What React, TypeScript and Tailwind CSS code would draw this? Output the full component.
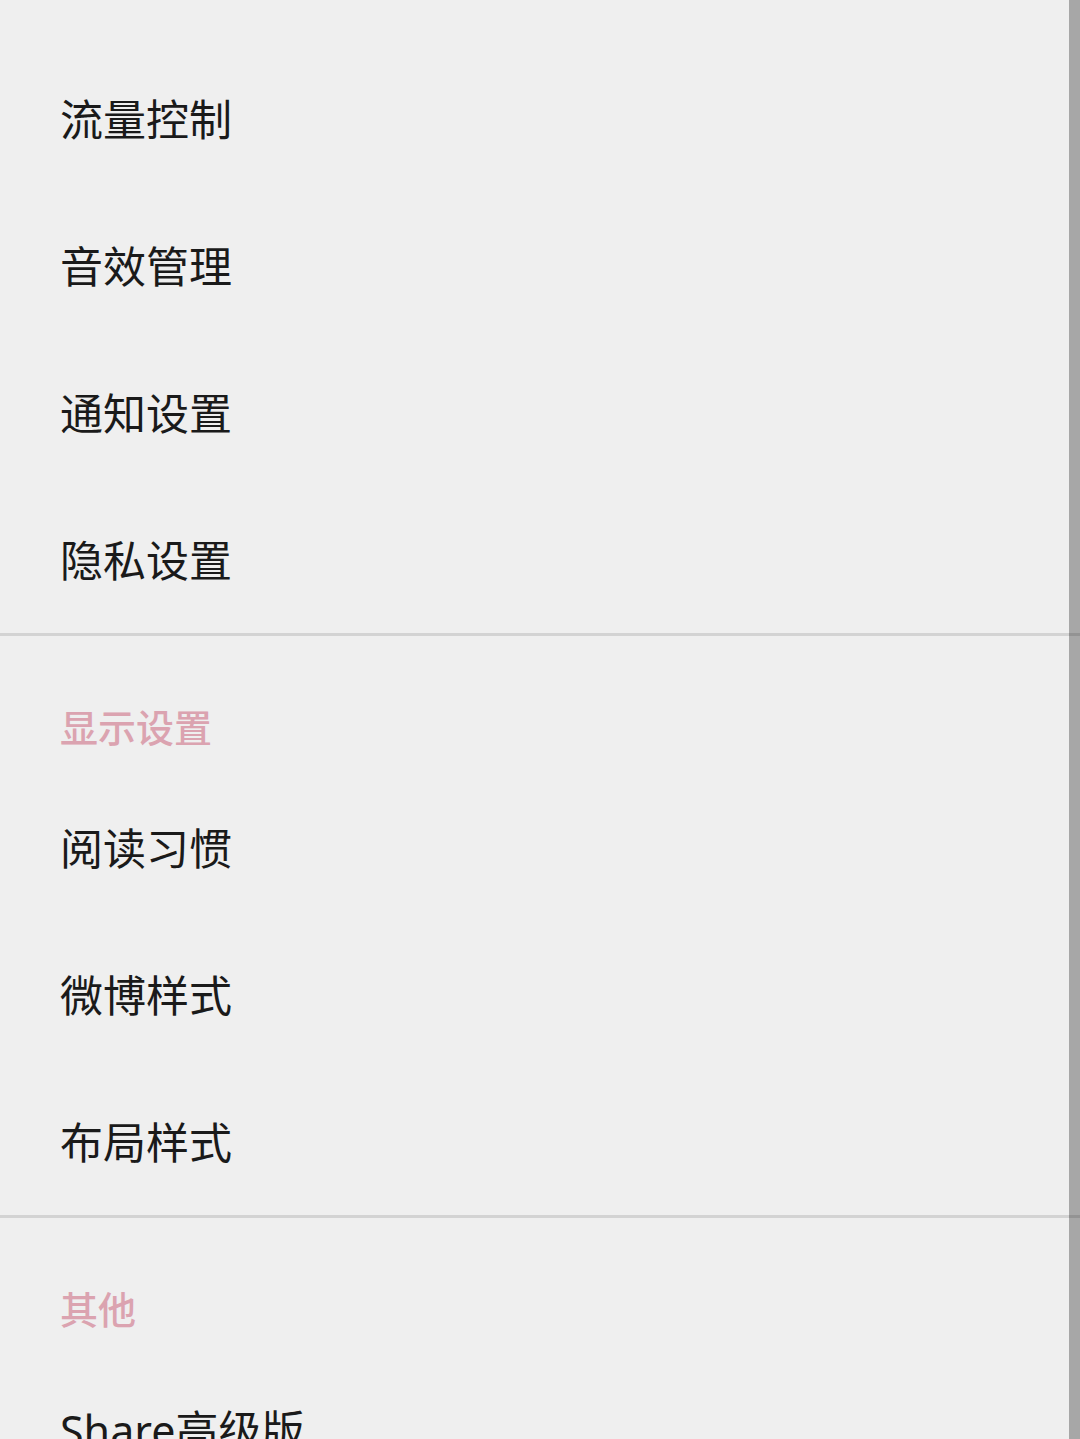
import React from "react";

interface Section {
  title?: string;
  items: string[];
}

const sections: Section[] = [
  { items: ["流量控制", "音效管理", "通知设置", "隐私设置"] },
  { title: "显示设置", items: ["阅读习惯", "微博样式", "布局样式"] },
  { title: "其他", items: ["Share高级版"] },
];

const font = { fontFamily: '"Noto Sans", "Noto Sans CJK SC", sans-serif' };

const App: React.FC = () => {
  return (
    <div
      className="relative w-[1080px] h-[1439px] overflow-hidden bg-[#efefef]"
      style={font}
    >
      <div className="flex flex-col pt-[45px]">
        {sections.map((section, i) => (
          <div key={i} className="flex flex-col">
            {section.title && (
              <div className="pl-[60px] pt-[72px] pb-[28px] text-[38px] leading-[38px] font-medium text-[#dba3b0]">
                {section.title}
              </div>
            )}
            {section.items.map((item) => (
              <div
                key={item}
                className="h-[147px] flex items-center pl-[60px] pt-[4px] text-[43px] text-[#1a1a1a]"
              >
                {item}
              </div>
            ))}
            {i < sections.length - 1 && (
              <div className="h-[3px] bg-[#d3d3d3]" />
            )}
          </div>
        ))}
      </div>
      {/* scrollbar */}
      <div className="absolute top-0 right-0 w-[11px] h-full bg-black/30" />
    </div>
  );
};

export default App;
